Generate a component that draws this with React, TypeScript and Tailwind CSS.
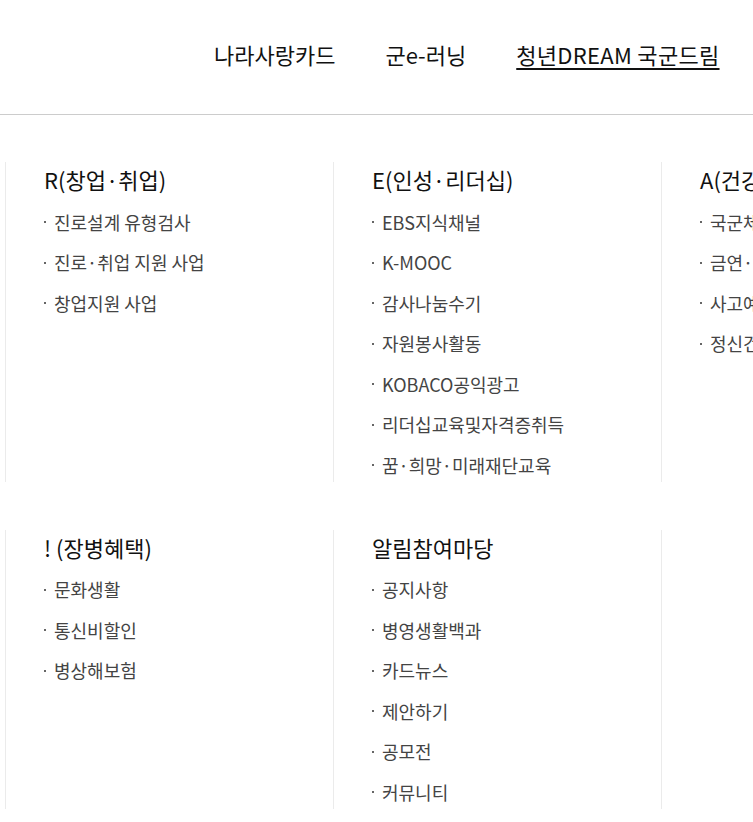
import React from 'react';

type Group = { title: string; items: string[] };

const rows: Group[][] = [
  [
    { title: 'R(창업·취업)', items: ['진로설계 유형검사', '진로·취업 지원 사업', '창업지원 사업'] },
    {
      title: 'E(인성·리더십)',
      items: ['EBS지식채널', 'K-MOOC', '감사나눔수기', '자원봉사활동', 'KOBACO공익광고', '리더십교육및자격증취득', '꿈·희망·미래재단교육'],
    },
    { title: 'A(건강관리)', items: ['국군체력단련', '금연·절주', '사고예방', '정신건강'] },
  ],
  [
    { title: '! (장병혜택)', items: ['문화생활', '통신비할인', '병상해보험'] },
    { title: '알림참여마당', items: ['공지사항', '병영생활백과', '카드뉴스', '제안하기', '공모전', '커뮤니티'] },
    { title: '', items: [] },
  ],
];

const font = { fontFamily: '"Noto Sans CJK KR", "Noto Sans", sans-serif' };

function Column({ group }: { group: Group }) {
  return (
    <div className="w-[328px] shrink-0 border-l border-[#ebebeb] pl-[38px]">
      {group.title && <h3 className="text-[22px] leading-[34px] text-[#111]">{group.title}</h3>}
      {group.items.length > 0 && (
        <ul className="mt-[6px] -mb-[4px]">
          {group.items.map((item) => (
            <li key={item} className="flex items-center h-[40.5px] text-[18px] text-[#444]">
              <span className="w-[2px] h-[2px] bg-[#666] mr-[8px] shrink-0" />
              {item}
            </li>
          ))}
        </ul>
      )}
    </div>
  );
}

export default function App() {
  return (
    <div className="w-[753px] h-[822px] overflow-hidden bg-white" style={font}>
      {/* Top nav */}
      <header className="h-[115px] border-b border-[#cccccc] flex items-start pt-[36px] pl-[214px]">
        <nav className="flex gap-[50px] whitespace-nowrap text-[22px] leading-[36px] text-[#111]">
          <span>나라사랑카드</span>
          <span>군e-러닝</span>
          <span className="underline decoration-2 underline-offset-[4px] tracking-[0.3px]">청년DREAM 국군드림</span>
        </nav>
      </header>

      {/* Mega menu */}
      <div className="pl-[5px] pt-[47px] flex flex-col gap-[48px]">
        {rows.map((row, i) => (
          <div key={i} className="flex whitespace-nowrap">
            {row.map((g, j) => (
              <Column key={j} group={g} />
            ))}
          </div>
        ))}
      </div>
    </div>
  );
}
